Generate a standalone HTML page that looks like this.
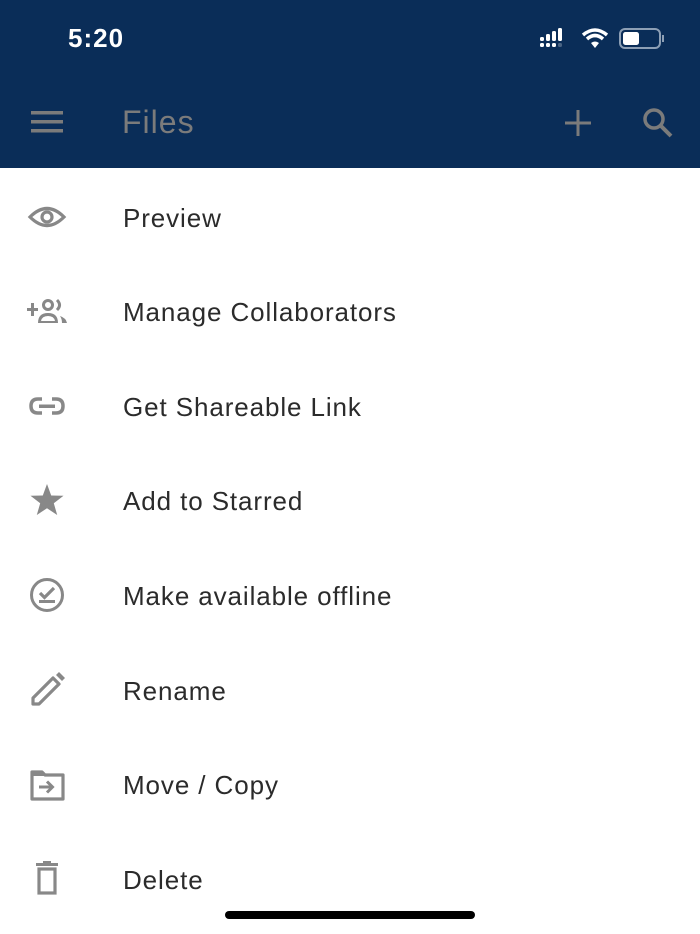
<!DOCTYPE html>
<html><head><meta charset="utf-8"><style>
body{margin:0;width:700px;height:934px;background:#fff;font-family:"Liberation Sans",sans-serif;overflow:hidden;position:relative}
.hdr{position:absolute;left:0;top:0;width:700px;height:168px;background:#0a2d58}
.time{position:absolute;left:68px;top:23px;color:#fff;font-size:26px;font-weight:bold;letter-spacing:1px}
.title{position:absolute;left:122px;top:104px;color:#7b7b7b;font-size:32px;letter-spacing:1px}
.item{position:absolute;left:0;width:700px;height:40px}
.item span{position:absolute;left:123px;top:1px;font-size:26px;color:#2b2b2b;line-height:40px;letter-spacing:0.9px}
.item svg{position:absolute;left:27px;top:0}
.bar{position:absolute;left:225px;top:911px;width:250px;height:8px;border-radius:4px;background:#000}
</style></head><body>
<div class="hdr">
<div class="time">5:20</div>
<svg style="position:absolute;left:538px;top:26px" width="130" height="26" viewBox="0 0 130 26">
<g fill="#fff"><rect x="2" y="11" width="4" height="4" rx="1.5"/><rect x="2" y="17" width="4" height="4" rx="1.5"/>
<rect x="8" y="8" width="4" height="7" rx="1.5"/><rect x="8" y="17" width="4" height="4" rx="1.5"/><rect x="14" y="5" width="4" height="10" rx="1.5"/><rect x="14" y="17" width="4" height="4" rx="1.5"/><rect x="20" y="2" width="4" height="13" rx="1.5"/></g>
<rect x="20" y="17" width="4" height="4" rx="1.5" fill="#4a6484"/>
<path d="M45 9 Q57 -1 69 9" stroke="#fff" stroke-width="3.5" fill="none"/><path d="M49 13 Q57 6 65 13" stroke="#fff" stroke-width="3.5" fill="none"/><path d="M53 17 L57 22 L61 17 Q57 14 53 17Z" fill="#fff"/>
<rect x="82" y="3" width="40" height="19" rx="5" stroke="#8d9fb5" stroke-width="2" fill="none"/><rect x="85" y="6" width="16" height="13" rx="2.5" fill="#fff"/><rect x="124" y="9" width="2" height="7" fill="#8d9fb5"/>
</svg>
<svg style="position:absolute;left:31px;top:111px" width="32" height="22"><g fill="#7b7b7b"><rect y="0" width="32" height="3.5"/><rect y="9" width="32" height="3.5"/><rect y="18" width="32" height="3.5"/></g></svg>
<div class="title">Files</div>
<svg style="position:absolute;left:565px;top:110px" width="26" height="26"><g fill="#7b7b7b"><rect x="11.5" y="0" width="3" height="26"/><rect x="0" y="11.5" width="26" height="3"/></g></svg>
<svg style="position:absolute;left:642px;top:107px" width="32" height="32"><circle cx="12" cy="12" r="9" stroke="#7b7b7b" stroke-width="3.5" fill="none"/><path d="M18 18 L29 29" stroke="#7b7b7b" stroke-width="4"/></svg>
</div>

<div class="item" style="top:197px"><svg width="40" height="40" viewBox="0 0 40 40"><path d="M3 20 Q20 3 37 20 Q20 37 3 20Z" fill="none" stroke="#888" stroke-width="3.2"/><circle cx="20" cy="20" r="5" fill="none" stroke="#888" stroke-width="3.2"/></svg><span>Preview</span></div>
<div class="item" style="top:291px"><svg width="44" height="40" viewBox="0 0 44 40"><g fill="#888"><rect x="0" y="17" width="11" height="3"/><rect x="4" y="12" width="3" height="13"/></g><circle cx="21" cy="14" r="4.5" fill="none" stroke="#888" stroke-width="3"/><path d="M11 32 Q11 22 21 22 Q31 22 31 32Z" fill="#888"/><path d="M14 30 Q15 25 21 25 Q27 25 28 30Z" fill="#fff"/><path d="M30 9 Q35 14 30 19" stroke="#888" stroke-width="3" fill="none"/><path d="M33 25 Q39 27 40 32 L35 32 Q35 28 33 25Z" fill="#888"/></svg><span>Manage Collaborators</span></div>
<div class="item" style="top:386px"><svg width="40" height="40" viewBox="0 0 40 40"><path d="M15 13 H11 Q4 13 4 20 Q4 27 11 27 H15 M25 13 H29 Q36 13 36 20 Q36 27 29 27 H25" fill="none" stroke="#888" stroke-width="3.5"/><rect x="12" y="18.5" width="16" height="3.5" fill="#888"/></svg><span>Get Shareable Link</span></div>
<div class="item" style="top:480px"><svg width="40" height="40" viewBox="0 0 40 40"><path d="M20 4 L24.2 15.5 L36.5 15.8 L26.8 23.3 L30.2 35 L20 28.2 L9.8 35 L13.2 23.3 L3.5 15.8 L15.8 15.5Z" fill="#888"/></svg><span>Add to Starred</span></div>
<div class="item" style="top:575px"><svg width="40" height="40" viewBox="0 0 40 40"><circle cx="20" cy="20" r="15.5" fill="none" stroke="#888" stroke-width="3"/><path d="M13 18 L17.5 22.5 L27 13" fill="none" stroke="#888" stroke-width="3.2"/><rect x="12" y="25" width="16" height="3" fill="#888"/></svg><span>Make available offline</span></div>
<div class="item" style="top:670px"><svg width="40" height="40" viewBox="0 0 40 40"><path d="M6 34 L6 28 L26 8 L32 14 L12 34Z" fill="none" stroke="#888" stroke-width="3.2" stroke-linejoin="round"/><path d="M29 5 L32 2 L38 8 L35 11Z" fill="#888"/></svg><span>Rename</span></div>
<div class="item" style="top:764px"><svg width="40" height="40" viewBox="0 0 40 40"><path d="M5 8 H15 L18 11 H36 V35 H5Z" fill="none" stroke="#888" stroke-width="3.2" stroke-linejoin="round"/><rect x="5" y="8" width="12" height="4" fill="#888"/><path d="M12 23 H25 M20 17.5 L25.5 23 L20 28.5" fill="none" stroke="#888" stroke-width="3"/></svg><span>Move / Copy</span></div>
<div class="item" style="top:859px"><svg width="40" height="40" viewBox="0 0 40 40"><rect x="9" y="4" width="22" height="3" fill="#888"/><rect x="16" y="2" width="8" height="3" fill="#888"/><rect x="12" y="10" width="16" height="24" fill="none" stroke="#888" stroke-width="3.2"/></svg><span>Delete</span></div>
<div class="bar"></div>
</body></html>
